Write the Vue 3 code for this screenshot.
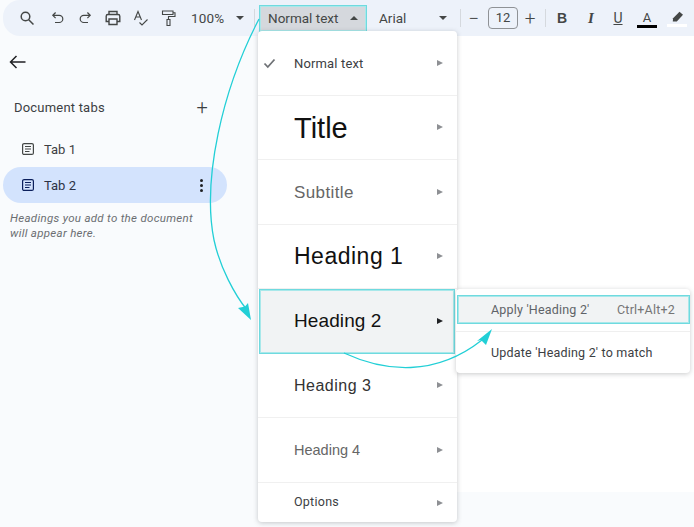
<script setup>
const styles = [
  { name: 'Normal text', cls: 'normal', checked: true },
  { name: 'Title', cls: 'title' },
  { name: 'Subtitle', cls: 'subtitle' },
  { name: 'Heading 1', cls: 'h1' },
  { name: 'Heading 2', cls: 'h2', active: true },
  { name: 'Heading 3', cls: 'h3' },
  { name: 'Heading 4', cls: 'h4' },
  { name: 'Options', cls: 'options' },
];
</script>

<template>
  <div class="page">
    <div class="toolbar">
      <button class="tool search">
        <svg width="16" height="16" viewBox="0 0 16 16" fill="none" stroke="#444746" stroke-width="1.5"><circle cx="6.5" cy="6.5" r="4.3" /><path d="M9.7 9.7 14.5 14.5" /></svg>
      </button>
      <button class="tool undo">
        <svg width="14" height="14" viewBox="0 0 14 14" fill="none" stroke="#444746" stroke-width="1.2"><path d="M4.6 1.5 1.8 4.3l2.8 2.8M2 4.3h6.2a3.6 3.6 0 0 1 0 7.2H4" /></svg>
      </button>
      <button class="tool redo">
        <svg width="14" height="14" viewBox="0 0 14 14" fill="none" stroke="#444746" stroke-width="1.2"><path d="M9.4 1.5l2.8 2.8-2.8 2.8M12 4.3H5.8a3.6 3.600 0 0 0 0 7.200H10" /></svg>
      </button>
      <button class="tool print">
        <svg width="16" height="16" viewBox="0 0 16 16" fill="none" stroke="#444746" stroke-width="1.4"><path d="M4 4.5V1.5h8v3M4 11.5H1.2V6.2c0-1 .7-1.7 1.7-1.7h10.200c1 0 1.700.7 1.700 1.700v5.300H12" /><path d="M4 9h8v5.500H4z" /></svg>
      </button>
      <button class="tool spell">
        <svg width="16" height="17" viewBox="0 0 16 17" fill="none" stroke="#444746" stroke-width="1.100"><path d="M1.500 10 5 1.500 8.500 10M2.800 7h4.400" /><path d="m6.500 12.500 2.500 2.500 5.500-5.500" /></svg>
      </button>
      <button class="tool paint">
        <svg width="15" height="17" viewBox="0 0 15 17" fill="none" stroke="#444746" stroke-width="1.100"><path d="M1.500 1h10.500v3.500H1.500z" /><path d="M12 2.800h2v3.700H7.500v3" /><path d="M6 9.500h3v6H6z" /></svg>
      </button>
      <span class="zoom-val">100%</span>
      <span class="caret zoom-caret"></span>
      <span class="divider first"></span>
      <div class="style-btn">
        <span>Normal text</span>
        <span class="caret up"></span>
      </div>
      <span class="font-name">Arial</span>
      <span class="caret font-caret"></span>
      <span class="divider second"></span>
      <span class="sign minus">−</span>
      <span class="size-box">12</span>
      <span class="sign plus">+</span>
      <span class="divider third"></span>
      <span class="fmt bold">B</span>
      <span class="fmt italic">I</span>
      <span class="fmt under">U</span>
      <span class="color-a">
        <span>A</span>
        <i></i>
      </span>
      <span class="pencil">
        <svg width="14" height="13" viewBox="0 0 14 13" fill="#444746"><path d="M9.500.800 13 3.800 6.800 10.500H2.800l.3-3.300z" /></svg>
        <i></i>
      </span>
    </div>

    <div class="body">
      <aside class="sidebar">
        <svg class="back" width="18" height="14" viewBox="0 0 18 14" fill="none" stroke="#202124" stroke-width="1.500"><path d="M7.500 1 1.500 7l6 6M1.500 7h15" /></svg>
        <div class="tabs-head">
          <span>Document tabs</span>
          <span class="add">+</span>
        </div>
        <div class="tab">
          <svg width="14" height="14" viewBox="0 0 14 14" fill="none" stroke="#444746" stroke-width="1.200"><rect x="1.600" y="1.600" width="10.800" height="10.800" rx="1.500" /><path d="M4 4.500h6M4 7h6M4 9.500h4.500" /></svg>
          <span>Tab 1</span>
        </div>
        <div class="tab selected">
          <svg width="14" height="14" viewBox="0 0 14 14" fill="none" stroke="#0b1f5c" stroke-width="1.200"><rect x="1.600" y="1.600" width="10.800" height="10.800" rx="1.500" /><path d="M4 4.500h6M4 7h6M4 9.500h4.500" /></svg>
          <span>Tab 2</span>
          <span class="dots"><i></i><i></i><i></i></span>
        </div>
        <p class="hint">Headings you add to the document will appear here.</p>
      </aside>
      <main class="doc"></main>
    </div>

    <div class="menu">
      <div v-for="s in styles" :key="s.name" class="row" :class="[s.cls, { active: s.active }]">
        <svg v-if="s.checked" class="check" width="13" height="11" viewBox="0 0 13 11" fill="none" stroke="#6f7276" stroke-width="1.800"><path d="M1.500 5.500 4.800 9l6.700-7.500" /></svg>
        <span class="label">{{ s.name }}</span>
        <span class="tri"></span>
      </div>
    </div>

    <div class="submenu">
      <div class="sub-row apply">
        <span>Apply 'Heading 2'</span>
        <span class="shortcut">Ctrl+Alt+2</span>
      </div>
      <div class="sub-row update">Update 'Heading 2' to match</div>
    </div>

    <svg class="arrows" width="694" height="527" viewBox="0 0 694 527" fill="none">
      <path d="M259 19C222 90 202 180 214 240C220 268 235 295 247 310" stroke="#22cfd6" stroke-width="1.300" />
      <path d="M251 320 238 308 245 306.500 248 303z" fill="#22cfd6" />
      <path d="M344 353C385 372 435 377 482 340" stroke="#22cfd6" stroke-width="1.300" />
      <path d="M492 329 486 345 481 340 477 341z" fill="#22cfd6" />
    </svg>
  </div>
</template>

<style scoped>
.page {
  position: relative;
  width: 694px;
  height: 527px;
  overflow: hidden;
  background: #f9fbfd;
  font-family: Roboto, "Liberation Sans", sans-serif;
  color: #444746;
}

/* toolbar */
.toolbar {
  display: flex;
  align-items: center;
  height: 36px;
  margin-left: 3px;
  background: #edf2fa;
  border-radius: 17px 0 0 17px;
  font-size: 13.500px;
}
.tool {
  display: flex;
  align-items: center;
  justify-content: center;
  width: 20px;
  height: 24px;
  padding: 0;
  border: 0;
  background: none;
}
.search { margin-left: 14px; }
.undo { margin-left: 11px; }
.redo { margin-left: 7px; }
.print { margin-left: 8px; }
.spell { margin-left: 8px; }
.paint { margin-left: 7px; }
.zoom-val { margin-left: 13px; width: 34px; letter-spacing: 0.2px; }
.caret {
  width: 0;
  height: 0;
  border-left: 4px solid transparent;
  border-right: 4px solid transparent;
  border-top: 4px solid #444746;
}
.caret.up {
  border-top: 0;
  border-bottom: 4px solid #444746;
  margin-left: 12px;
}
.zoom-caret { margin-left: 11px; }
.divider {
  width: 1px;
  height: 18px;
  background: #d5d9de;
}
.divider.first { margin-left: 10px; }
.divider.second { margin-left: 13px; }
.divider.third { margin-left: 8px; }
.style-btn {
  display: flex;
  align-items: center;
  box-sizing: border-box;
  align-self: flex-start;
  width: 108px;
  height: 27px;
  margin: 5px 0 0 4px;
  padding: 0 0 2px 9px;
  background: #d5d8dd;
  box-shadow: inset 0 0 0 1px #6fdadf, inset 0 0 0 2px #a8e8ea;
}
.font-name { margin-left: 12px; width: 60px; }
.sign {
  width: 14px;
  text-align: center;
  font-size: 19px;
  font-weight: 300;
  line-height: 1;
}
.minus { margin-left: 6px; }
.plus { margin-left: 5px; }
.size-box {
  box-sizing: border-box;
  width: 30px;
  height: 22px;
  margin-left: 7px;
  border: 1px solid #8f9296;
  border-radius: 4px;
  text-align: center;
  line-height: 20px;
  font-size: 13px;
}
.fmt {
  width: 14px;
  text-align: center;
  font-size: 14px;
}
.bold { margin-left: 9px; font-weight: 700; font-family: "Liberation Sans", sans-serif; }
.italic { margin-left: 15px; font-style: italic; font-family: "Liberation Serif", serif; font-weight: 700; font-size: 15px; }
.under { margin-left: 13px; text-decoration: underline; font-size: 14px; }
.color-a {
  display: flex;
  flex-direction: column;
  align-items: center;
  width: 20px;
  margin-left: 12px;
  padding-top: 1px;
  font-size: 13px;
  line-height: 15px;
}
.color-a i {
  width: 20px;
  height: 3px;
  background: #000;
}
.pencil {
  display: flex;
  flex-direction: column;
  align-items: center;
  width: 20px;
  margin-left: 10px;
  padding-top: 2px;
}
.pencil i {
  width: 20px;
  height: 3px;
  background: #fff;
}

/* body */
.body {
  display: flex;
  height: 456px;
}
.sidebar {
  position: relative;
  box-sizing: border-box;
  width: 258px;
  padding-top: 19px;
}
.doc {
  flex: 1;
  background: #fff;
}
.back {
  display: block;
  margin-left: 9px;
}
.tabs-head {
  display: flex;
  justify-content: space-between;
  align-items: center;
  width: 194px;
  margin: 28px 0 0 14px;
  font-size: 13px;
  color: #3c4043;
  letter-spacing: 0.2px;
}
.add {
  font-size: 20px;
  font-weight: 300;
  line-height: 20px;
}
.tab {
  display: flex;
  align-items: center;
  gap: 9px;
  box-sizing: border-box;
  width: 224px;
  height: 36px;
  margin-left: 3px;
  padding-left: 18px;
  border-radius: 18px;
  font-size: 13px;
  color: #3c4043;
}
.tabs-head + .tab { margin-top: 14px; }
.selected {
  position: relative;
  background: #d3e3fd;
  color: #2b3245;
}
.dots {
  display: flex;
  flex-direction: column;
  gap: 2px;
  position: absolute;
  left: 197px;
  top: 12px;
}
.dots i {
  width: 3px;
  height: 3px;
  border-radius: 50%;
  background: #202124;
}
.hint {
  width: 195px;
  margin: 8px 0 0 10px;
  font-size: 11.500px;
  font-style: italic;
  line-height: 15px;
  color: #6b6e72;
  letter-spacing: 0.3px;
}

/* style menu */
.menu {
  position: absolute;
  left: 258px;
  top: 31px;
  width: 199px;
  height: 491px;
  display: flex;
  flex-direction: column;
  background: #fff;
  border-radius: 4px;
  box-shadow: 0 1px 5px rgba(60, 64, 67, 0.28);
}
.row {
  position: relative;
  display: flex;
  align-items: center;
  flex: 0 0 64.500px;
  box-sizing: border-box;
  padding: 2px 0 0 36px;
  border-bottom: 1px solid #f0f0f0;
  color: #111;
  font-family: "Liberation Sans", sans-serif;
}
.row:last-child {
  flex-basis: 40px;
  border-bottom: 0;
}
.check {
  position: absolute;
  left: 5px;
  top: 27px;
}
.tri {
  position: absolute;
  right: 14px;
  top: 50%;
  margin-top: -3px;
  border-left: 6px solid #8e9094;
  border-top: 3px solid transparent;
  border-bottom: 3px solid transparent;
}
.normal { font-family: Roboto, sans-serif; font-size: 13px; color: #3c4043; letter-spacing: 0.15px; }
.title { font-size: 29px; }
.subtitle { font-size: 17px; color: #666; letter-spacing: 0.4px; }
.h1 { padding-top: 0; font-size: 23px; letter-spacing: 0.5px; }
.h2 { padding-top: 0; font-size: 19px; letter-spacing: 0.1px; }
.h3 { font-size: 16px; color: #333; letter-spacing: 0.5px; }
.h4 { padding-top: 0; font-size: 14.500px; color: #666; }
.options { padding: 0 0 2px 36px; font-family: Roboto, sans-serif; font-size: 12.500px; color: #3c4043; letter-spacing: 0.25px; }
.active {
  margin: 0 2px 0 1px;
  padding-left: 35px;
  background: #f1f3f4;
  border: 0;
  box-shadow: inset 0 0 0 1px #6fdadf, inset 0 0 0 2px #a8e8ea;
}
.active .tri {
  right: 12px;
  border-left-color: #202124;
}

/* submenu */
.submenu {
  position: absolute;
  left: 456px;
  top: 289px;
  width: 234px;
  height: 84px;
  box-sizing: border-box;
  padding-top: 6px;
  background: #fff;
  border-radius: 4px;
  box-shadow: 0 1px 5px rgba(60, 64, 67, 0.28);
  font-size: 12.500px;
  color: #3c4043;
  letter-spacing: 0.2px;
}
.sub-row {
  display: flex;
  align-items: center;
  justify-content: space-between;
  box-sizing: border-box;
  padding: 0 15px 0 34px;
}
.apply {
  height: 29px;
  margin: 0 0 7px 1px;
  background: #f1f3f4;
  box-shadow: inset 0 0 0 1px #6fdadf, inset 0 0 0 2px #a8e8ea;
  color: #5f6368;
}
.update {
  height: 41px;
  padding-left: 35px;
  border-top: 1px solid #efefef;
}
.shortcut { color: #757575; }

/* arrows */
.arrows {
  position: absolute;
  left: 0;
  top: 0;
  pointer-events: none;
}
</style>
